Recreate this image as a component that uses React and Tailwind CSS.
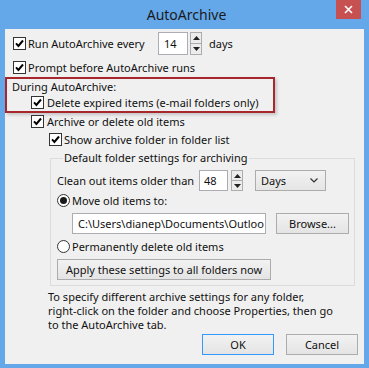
import React from 'react'

const Check = () => (
  <span className="w-[13px] h-[13px] border border-[#333333] bg-white flex items-center justify-center shrink-0">
    <svg width="9" height="9" viewBox="0 0 9 9">
      <path d="M1 4.4 L3.4 6.9 L8 1.5" stroke="#000" strokeWidth="2" fill="none" />
    </svg>
  </span>
)

const Radio = ({ checked }) => (
  <span className="w-[13px] h-[13px] rounded-full border border-[#333333] bg-white flex items-center justify-center shrink-0">
    {checked && <span className="w-[7px] h-[7px] rounded-full bg-[#1a1a1a]" />}
  </span>
)

const Spin = ({ h }) => (
  <div className={`flex flex-col w-[12px] ${h} border border-[#acacac] bg-[#ececec]`}>
    <div className="flex-1 flex items-center justify-center border-b border-[#acacac]">
      <svg width="7" height="4" viewBox="0 0 7 4"><path d="M0 4 L3.5 0 L7 4 Z" fill="#222" /></svg>
    </div>
    <div className="flex-1 flex items-center justify-center">
      <svg width="7" height="4" viewBox="0 0 7 4"><path d="M0 0 L3.5 4 L7 0 Z" fill="#222" /></svg>
    </div>
  </div>
)

const Btn = ({ children, className = '' }) => (
  <div className={`h-[21px] flex items-center justify-center border bg-gradient-to-b from-[#f2f2f2] to-[#e4e4e4] whitespace-nowrap ${className}`}>
    {children}
  </div>
)

export default function App() {
  return (
    <div
      className="w-[369px] h-[368px] bg-[#64a8ea] flex flex-col text-[#111]"
      style={{ fontFamily: '"Noto Sans", "Open Sans", sans-serif' }}
    >
      <div className="h-[29px] relative flex items-center justify-center shrink-0">
        <span className="text-[14px] text-[#1a1a1a] pl-[4px]">AutoArchive</span>
        <div className="absolute right-[8px] top-0 w-[25px] h-[19px] bg-[#c75050] flex items-center justify-center">
          <svg width="9" height="9" viewBox="0 0 9 9">
            <path d="M1 1 L8 8 M8 1 L1 8" stroke="#fff" strokeWidth="1.6" />
          </svg>
        </div>
      </div>

      <div className="mx-[5px] h-[335px] bg-[#f0f0f0] flex flex-col text-[11px] leading-none pt-[3px]">
        <div className="flex items-center h-[23px] ml-[8px]">
          <Check />
          <span className="w-[130px] ml-[2px] whitespace-nowrap">Run AutoArchive every</span>
          <div className="w-[30px] h-[23px] border border-[#abadb3] bg-white flex items-center pl-[5px]">14</div>
          <div className="ml-[2px]"><Spin h="h-[23px]" /></div>
          <span className="ml-[7px]">days</span>
        </div>

        <div className="flex items-center h-[19px] mt-[3px] ml-[8px]">
          <Check />
          <span className="ml-[2px] whitespace-nowrap">Prompt before AutoArchive runs</span>
        </div>

        <div className="w-[270px] h-[36px] border-2 border-[#a8272d] shadow-[2px_2px_3px_rgba(0,0,0,0.18)] flex flex-col">
          <div className="h-[15px] flex items-center pl-[5px] whitespace-nowrap">During AutoArchive:</div>
          <div className="h-[17px] flex items-center pl-[24px]">
            <Check />
            <span className="ml-[3px] whitespace-nowrap">Delete expired items (e-mail folders only)</span>
          </div>
        </div>

        <div className="flex items-center h-[17px] ml-[26px]">
          <Check />
          <span className="ml-[3px] whitespace-nowrap">Archive or delete old items</span>
        </div>

        <div className="flex items-center h-[19px] ml-[44px]">
          <Check />
          <span className="ml-[2px] whitespace-nowrap">Show archive folder in folder list</span>
        </div>

        <fieldset className="ml-[45px] w-[305px] border border-[#dcdcdc] pl-[6px] pb-[5px]">
          <legend className="ml-[6px] px-[1px] leading-[18px] whitespace-nowrap">Default folder settings for archiving</legend>

          <div className="flex items-center h-[21px] mt-[3px]">
            <span className="w-[142px] whitespace-nowrap">Clean out items older than</span>
            <div className="w-[29px] h-[21px] border border-[#abadb3] bg-white flex items-center pl-[4px]">48</div>
            <div className="ml-[3px]"><Spin h="h-[21px]" /></div>
            <div className="ml-[12px] w-[71px] h-[21px] border border-[#acacac] bg-gradient-to-b from-[#f2f2f2] to-[#e5e5e5] flex items-center justify-between pl-[5px] pr-[7px]">
              <span>Days</span>
              <svg width="8" height="5" viewBox="0 0 8 5"><path d="M0.5 0.5 L4 4 L7.5 0.5" stroke="#333" strokeWidth="1.2" fill="none" /></svg>
            </div>
          </div>

          <div className="flex items-center h-[19px]">
            <Radio checked />
            <span className="ml-[2px] whitespace-nowrap">Move old items to:</span>
          </div>

          <div className="flex items-center h-[22px] mt-[2px] ml-[15px]">
            <div className="w-[194px] h-[21px] border border-[#abadb3] bg-white flex items-center pl-[5px] whitespace-nowrap overflow-hidden">
              C:\Users\dianep\Documents\Outloo
            </div>
            <Btn className="ml-[10px] w-[73px] border-[#acacac]">Browse...</Btn>
          </div>

          <div className="flex items-center h-[23px] mt-[1px]">
            <Radio />
            <span className="ml-[2px] whitespace-nowrap">Permanently delete old items</span>
          </div>

          <Btn className="mt-[1px] w-[214px] border-[#acacac]">Apply these settings to all folders now</Btn>
        </fieldset>

        <div className="mt-[4px] ml-[43px] leading-[14px] flex flex-col whitespace-nowrap">
          <span>To specify different archive settings for any folder,</span>
          <span>right-click on the folder and choose Properties, then go</span>
          <span>to the AutoArchive tab.</span>
        </div>

        <div className="flex mt-[2px] ml-[197px] gap-[12px]">
          <Btn className="w-[72px] border-[#3399ff]">OK</Btn>
          <Btn className="w-[72px] border-[#acacac]">Cancel</Btn>
        </div>
      </div>
    </div>
  )
}
